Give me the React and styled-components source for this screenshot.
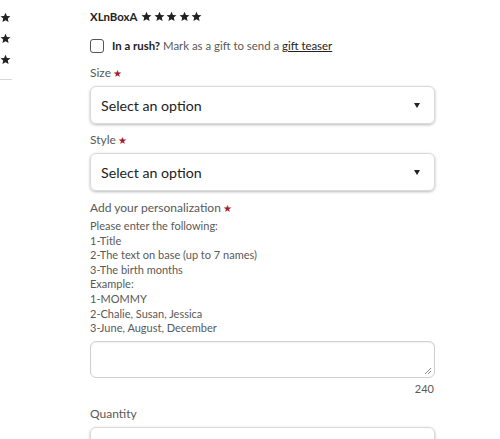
import React from 'react';
import styled, { createGlobalStyle } from 'styled-components';

const GlobalStyle = createGlobalStyle`
    body {
        margin: 0;
        background: #fff;
        font-family: Lato, "Liberation Sans", Arial, sans-serif;
        color: #222;
    }
`;

const Page = styled.div`
    display: flex;
    align-items: flex-start;
    width: 500px;
    height: 439px;
    overflow: hidden;
`;

const Sidebar = styled.div`
    width: 90px;
    flex-shrink: 0;
    display: flex;
    flex-direction: column;
    gap: 10px;
    padding-top: 12px;
`;

const SideRule = styled.div`
    width: 12px;
    height: 1px;
    background: #d8d8d8;
    margin-top: 4px;
`;

const Main = styled.div`
    width: 345px;
    display: flex;
    flex-direction: column;
`;

const Reviewer = styled.div`
    display: flex;
    align-items: center;
    gap: 4px;
    margin-top: 9px;
    height: 14px;
    font-size: 11.4px;
    font-weight: bold;
    color: #222;
`;

const Stars = styled.span`
    display: flex;
    gap: 1.5px;
`;

const RushRow = styled.label`
    display: flex;
    align-items: center;
    gap: 8px;
    margin-top: 15px;
    height: 15px;
    font-size: 11.4px;
    color: #595959;
`;

const Box = styled.span`
    box-sizing: border-box;
    width: 14px;
    height: 14px;
    border: 1.5px solid #555;
    border-radius: 3px;
`;

const Bold = styled.b`
    color: #222;
`;

const Teaser = styled.span`
    color: #222;
    text-decoration: underline;
`;

const Label = styled.div`
    font-size: 12px;
    color: #595959;
    height: 14px;
    line-height: 14px;
    margin-top: ${(p) => p.$top}px;
`;

const Required = styled.span`
    color: #a61a2e;
    font-size: 10px;
    margin-left: 2px;
`;

const Select = styled.div`
    display: flex;
    align-items: center;
    justify-content: space-between;
    box-sizing: border-box;
    height: 38px;
    margin-top: ${(p) => p.$top}px;
    padding: 0 14px 0 10px;
    border: 1px solid #dadada;
    border-radius: 6px;
    box-shadow: 0 1px 3px rgba(0, 0, 0, 0.28);
    font-size: 14.2px;
    color: #222;
`;

const Caret = styled.span`
    width: 0;
    height: 0;
    border-left: 3.5px solid transparent;
    border-right: 3.5px solid transparent;
    border-top: 5px solid #222;
`;

const Instructions = styled.div`
    margin-top: 4px;
    font-size: 11px;
    line-height: 14.6px;
    color: #595959;
`;

const TextArea = styled.div`
    box-sizing: border-box;
    height: 37px;
    margin-top: 5px;
    border: 1px solid #cfcfcf;
    border-radius: 6px;
    box-shadow: inset 0 1px 2px rgba(0, 0, 0, 0.06);
    position: relative;
`;

const Grip = styled.svg`
    position: absolute;
    right: 2px;
    bottom: 2px;
`;

const Counter = styled.div`
    text-align: right;
    font-size: 11px;
    color: #595959;
    margin-top: 4px;
    padding-right: 1px;
`;

const QuantityBox = styled.div`
    box-sizing: border-box;
    height: 38px;
    margin-top: 6px;
    border: 1px solid #dadada;
    border-radius: 6px;
    box-shadow: 0 1px 3px rgba(0, 0, 0, 0.28);
`;

const Star = ({ size = 11 }) => (
    <svg width={size} height={size} viewBox="0 0 24 24">
        <path
            fill="#222"
            d="M12 1.5l3.1 7.1 7.7.7-5.8 5.1 1.7 7.6L12 18l-6.7 4 1.7-7.6-5.8-5.1 7.7-.7z"
        />
    </svg>
);

const lines = [
    'Please enter the following:',
    '1-Title',
    '2-The text on base (up to 7 names)',
    '3-The birth months',
    'Example:',
    '1-MOMMY',
    '2-Chalie, Susan, Jessica',
    '3-June, August, December',
];

const App = () => {
    return (
        <Page>
            <GlobalStyle />
            <Sidebar>
                <Star size={11} />
                <Star size={11} />
                <Star size={11} />
                <SideRule />
            </Sidebar>
            <Main>
                <Reviewer>
                    XLnBoxA
                    <Stars>
                        {[0, 1, 2, 3, 4].map((i) => (
                            <Star key={i} size={11} />
                        ))}
                    </Stars>
                </Reviewer>
                <RushRow>
                    <Box />
                    <span>
                        <Bold>In a rush?</Bold> Mark as a gift to send a <Teaser>gift teaser</Teaser>
                    </span>
                </RushRow>
                <Label $top={13}>Size<Required>★</Required></Label>
                <Select $top={6}>
                    Select an option
                    <Caret />
                </Select>
                <Label $top={9}>Style<Required>★</Required></Label>
                <Select $top={6}>
                    Select an option
                    <Caret />
                </Select>
                <Label $top={10}>Add your personalization<Required>★</Required></Label>
                <Instructions>
                    {lines.map((l) => (
                        <div key={l}>{l}</div>
                    ))}
                </Instructions>
                <TextArea>
                    <Grip width="8" height="8" viewBox="0 0 8 8">
                        <path d="M7 1 L1 7 M7 4 L4 7" stroke="#888" strokeWidth="1" />
                    </Grip>
                </TextArea>
                <Counter>240</Counter>
                <Label $top={12}>Quantity</Label>
                <QuantityBox />
            </Main>
        </Page>
    );
};

export default App;
